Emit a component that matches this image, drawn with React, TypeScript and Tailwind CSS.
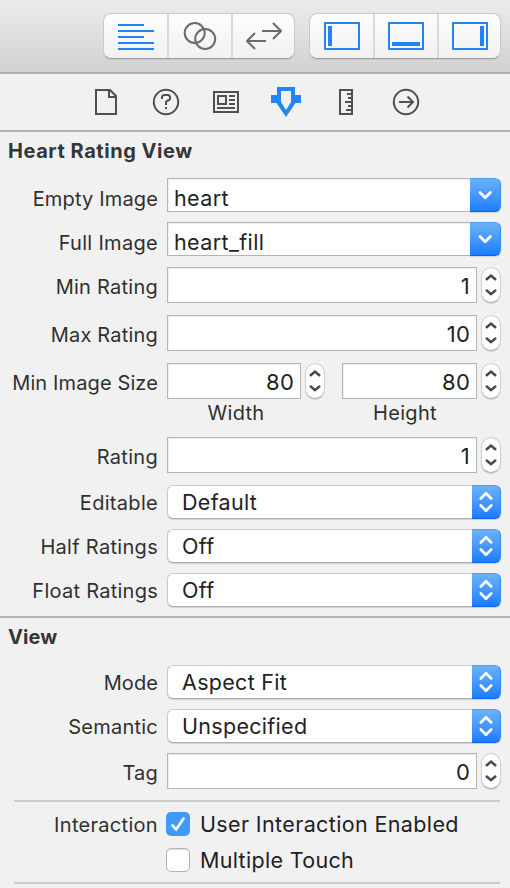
import type { ReactNode } from "react";

function Label({ children, className }: { children: ReactNode; className: string }) {
  return (
    <div className={`w-[158px] shrink-0 text-right text-[20px] leading-[24px] whitespace-nowrap text-[#303030] ${className}`}>
      {children}
    </div>
  );
}

function Row({ children, className }: { children: ReactNode; className: string }) {
  return <div className={`flex items-center ${className}`}>{children}</div>;
}

function Combo({ value }: { value: string }) {
  return (
    <div className="ml-[9px] flex h-[34px] w-[334px]">
      <div className="flex flex-1 items-center border border-r-0 border-[#b4b4b4] bg-white pt-[6px] pl-[6px] text-[21.5px] leading-[26px] tracking-[0.400px] text-[#222] shadow-[inset_1px_1px_0_#efefef]">
        {value}
      </div>
      <div className="flex h-[34px] w-[31px] items-center justify-center rounded-r-[6px] border border-l-0 border-t-[#4f9ff3] border-r-[#3489f5] border-b-[#0c63f2] bg-linear-to-b from-[#6bb1f8] to-[#187dfc] shadow-[0_1px_1px_#0002]">
        <svg width="16" height="12" viewBox="0 0 16 12" fill="none" stroke="#fff" strokeWidth="2.8" strokeLinecap="round" strokeLinejoin="round">
          <path d="M3 3.500 8.200 8.700l5.200-5.200" />
        </svg>
      </div>
    </div>
  );
}

function Popup({ value }: { value: string }) {
  return (
    <div className="ml-[9px] flex h-[34px] w-[334px] rounded-[6px] shadow-[0_1px_1px_#0002]">
      <div className="flex flex-1 items-center rounded-l-[6px] border border-r-0 border-[#c8c8c8] border-b-[#aeaeae] bg-white pb-[1px] pl-[14px] text-[21.500px] leading-[26px] tracking-[0.300px] text-[#222]">
        {value}
      </div>
      <div className="flex w-[29px] items-center justify-center rounded-r-[6px] border border-l-0 border-t-[#4f9ff3] border-r-[#3489f5] border-b-[#0c63f2] bg-linear-to-b from-[#6bb1f8] to-[#187dfc]">
        <svg className="shrink-0" width="16" height="22" viewBox="0 0 16 22" fill="none" stroke="#fff" strokeWidth="2.7" strokeLinecap="round" strokeLinejoin="round">
          <path d="M2.800 7.500 8 2.300 13.200 7.500M2.800 14.500 8 19.700 13.200 14.500" />
        </svg>
      </div>
    </div>
  );
}

function NumberField({ value, className }: { value: string; className: string }) {
  return (
    <>
      <div className={`flex h-[36px] items-center justify-end border border-[#b4b4b4] bg-white pt-[1px] pr-[6px] text-[22px] leading-[26px] tracking-[0.200px] text-[#222] shadow-[inset_1px_1px_0_#efefef] ${className}`}>
        {value}
      </div>
      <div className="ml-[4px] flex h-[36px] w-[20px] items-center justify-center rounded-full border border-[#cfcfcf] border-b-[#aaa] bg-white shadow-[0_1px_1px_#0002]">
        <svg className="shrink-0" width="14" height="24" viewBox="0 0 14 24" fill="none" stroke="#484848" strokeWidth="2.5" strokeLinecap="round" strokeLinejoin="miter">
          <path d="M2.700 6.300 7 2.600 11.300 6.300M2.700 17.500 7 21.200 11.300 17.500" />
        </svg>
      </div>
    </>
  );
}

function Segments({ icons }: { icons: [ReactNode, ReactNode, ReactNode] }) {
  return (
    <div className="flex h-[46px] w-[192px] overflow-hidden rounded-[8px] border border-[#c9c9c9] border-b-[#a2a2a2] bg-linear-to-b from-[#fdfdfd] to-[#f1f1f1] shadow-[0_1px_0_#0001]">
      <div className="flex w-[65px] items-center border-r-2 border-[#dadada] pl-[14px]">{icons[0]}</div>
      <div className="flex w-[64px] items-center border-r-2 border-[#dadada] pl-[13px]">{icons[1]}</div>
      <div className="flex flex-1 items-center pl-[13px]">{icons[2]}</div>
    </div>
  );
}

const blue = "#2284f7";

const editorIcons: [ReactNode, ReactNode, ReactNode] = [
  <svg key="a" className="shrink-0" width="36" height="28" viewBox="0 0 36 28" fill={blue}>
    <path d="M0 2h26v2H0zM0 8h36v2H0zM0 14h26v2H0zM0 20h36v2H0zM0 26h36v2H0z" />
  </svg>,
  <svg key="b" className="shrink-0" width="36" height="28" viewBox="0 0 36 28" fill="none" stroke="#6b6b6b" strokeWidth="2">
    <circle cx="12.700" cy="11" r="10" />
    <circle cx="23.200" cy="17" r="10" />
  </svg>,
  <svg key="c" className="shrink-0" width="36" height="28" viewBox="0 0 36 28" fill="none" stroke="#6b6b6b" strokeWidth="2">
    <path d="M16 9h19M27 1l8 8-8 8M20 19H1M9 11l-8 8 8 8" />
  </svg>,
];

const panelIcons: [ReactNode, ReactNode, ReactNode] = [
  <svg key="a" className="shrink-0" width="36" height="28" viewBox="0 0 36 28" fill={blue}>
    <path fillRule="evenodd" d="M0 0h36v28H0zM2 2v24h32V2z" />
    <path d="M4 4h4v20H4z" />
  </svg>,
  <svg key="b" className="shrink-0" width="36" height="28" viewBox="0 0 36 28" fill={blue}>
    <path fillRule="evenodd" d="M0 0h36v28H0zM2 2v24h32V2z" />
    <path d="M4 20h28v4H4z" />
  </svg>,
  <svg key="c" className="shrink-0" width="36" height="28" viewBox="0 0 36 28" fill={blue}>
    <path fillRule="evenodd" d="M0 0h36v28H0zM2 2v24h32V2z" />
    <path d="M28 4h4v20h-4z" />
  </svg>,
];

const tabIcons = [
  <svg key="file" width="30" height="30" viewBox="0 0 30 30" fill="none" stroke="#505050" strokeWidth="2">
    <path d="M5 3h14l6 6v18H5zM18 4v6h6" />
  </svg>,
  <svg key="help" width="30" height="30" viewBox="0 0 30 30" fill="none" stroke="#505050" strokeWidth="2">
    <circle cx="15" cy="15" r="12.200" />
    <path d="M11 12V9.500L12.500 8h5L19 9.500V12l-1.500 1.500h-1L15 15v3M15 20v2" />
  </svg>,
  <svg key="identity" width="30" height="30" viewBox="0 0 30 30" fill="none" stroke="#505050" strokeWidth="2">
    <path d="M3 5h24v20H3zM7 9h8v8H7zM18 9h6M18 13h6M18 17h6M6 21h18" />
  </svg>,
  <svg key="attributes" width="30" height="32" viewBox="0 0 30 32" fill={blue}>
    <path fillRule="evenodd" d="M6 1h18v8h6v8h-5.500L15 31 5.500 17H0V9h6zM10 5v11l5 8 5-8V5z" />
  </svg>,
  <svg key="size" width="30" height="30" viewBox="0 0 30 30" fill="none" stroke="#505050" strokeWidth="2">
    <path d="M9 3h12v24H9zM16 7h4M17 11h3M14 15h6M17 19h3M15 23h5" />
  </svg>,
  <svg key="connections" width="30" height="30" viewBox="0 0 30 30" fill="none" stroke="#505050" strokeWidth="2">
    <circle cx="15" cy="15" r="12.200" />
    <path d="M8 15h14M16.500 9.500 22 15l-5.500 5.500" />
  </svg>,
];

export default function App() {
  return (
    <div className="h-[888px] w-[510px] overflow-hidden bg-[#f1f1f1] font-['Inter','Liberation_Sans',sans-serif]">
      <header className="flex h-[74px] justify-between border-b-2 border-[#b0b0b0] bg-linear-to-b from-[#ececec] to-[#d1d1d1] pt-[13px] pr-[9px] pl-[103px]">
        <Segments icons={editorIcons} />
        <Segments icons={panelIcons} />
      </header>
      <nav className="flex h-[58px] items-center gap-[30px] border-b-2 border-[#b0b0b0] pl-[91px]">
        {tabIcons}
      </nav>

      <section className="h-[486px] border-b-2 border-[#b2b2b2]">
        <h2 className="h-[46px] pt-[6px] pl-[8px] text-[20px] leading-[26px] font-bold tracking-[0.550px] text-[#363636]">Heart Rating View</h2>
        <Row className="h-[34px]"><Label className="pt-[8px] tracking-[0.150px]">Empty Image</Label><Combo value="heart" /></Row>
        <Row className="mt-[10px] h-[34px]"><Label className="pt-[8px] tracking-[0.300px]">Full Image</Label><Combo value="heart_fill" /></Row>
        <Row className="mt-[11px] h-[36px]"><Label className="pt-[4px] tracking-[0.250px]">Min Rating</Label><NumberField value="1" className="ml-[9px] w-[310px]" /></Row>
        <Row className="mt-[12px] h-[36px]"><Label className="pt-[4px] tracking-[0.200px]">Max Rating</Label><NumberField value="10" className="ml-[9px] w-[310px]" /></Row>
        <Row className="mt-[12px] h-[36px]">
          <Label className="pt-[4px] tracking-[0.120px]">Min Image Size</Label>
          <NumberField value="80" className="ml-[9px] w-[134px]" />
          <NumberField value="80" className="ml-[17px] w-[135px]" />
        </Row>
        <div className="flex h-[38px] pt-[2px] pl-[167px] text-center text-[20px] leading-[24px] tracking-[0.300px] text-[#303030]">
          <div className="w-[138px]">Width</div>
          <div className="ml-[32px] w-[136px]">Height</div>
        </div>
        <Row className="h-[36px]"><Label className="pt-[4px] tracking-[0.300px]">Rating</Label><NumberField value="1" className="ml-[9px] w-[310px]" /></Row>
        <Row className="mt-[12px] h-[34px]"><Label className="pt-[2px] tracking-[0.300px]">Editable</Label><Popup value="Default" /></Row>
        <Row className="mt-[10px] h-[34px]"><Label className="pt-[2px] tracking-[0.300px]">Half Ratings</Label><Popup value="Off" /></Row>
        <Row className="mt-[10px] h-[34px]"><Label className="pt-[2px] tracking-[0.260px]">Float Ratings</Label><Popup value="Off" /></Row>
      </section>

      <section>
        <h2 className="h-[47px] pt-[6px] pl-[8px] text-[20px] leading-[26px] font-bold tracking-[0.100px] text-[#363636]">View</h2>
        <Row className="h-[34px]"><Label className="pt-[2px] tracking-[0.100px]">Mode</Label><Popup value="Aspect Fit" /></Row>
        <Row className="mt-[10px] h-[34px]"><Label className="pt-[2px] tracking-[0.240px]">Semantic</Label><Popup value="Unspecified" /></Row>
        <Row className="mt-[10px] h-[36px]"><Label className="pt-[4px] tracking-[0.200px]">Tag</Label><NumberField value="0" className="ml-[9px] w-[310px]" /></Row>
        <div className="mt-[11px] mr-[10px] ml-[14px] h-[2px] bg-[#cccccc]" />
        <Row className="mt-[10px] h-[24px]">
          <Label className="pt-[2px] tracking-[0.300px]">Interaction</Label>
          <div className="ml-[8px] flex size-[24px] items-center justify-center rounded-[5px] bg-[#3f9af9]">
            <svg width="18" height="18" viewBox="0 0 18 18" fill="none" stroke="#fff" strokeWidth="2.600" strokeLinecap="round">
              <path d="M3.500 10.500 7.200 14.500 14.500 3.500" />
            </svg>
          </div>
          <span className="ml-[10px] text-[21.500px] leading-[26px] tracking-[0.370px] whitespace-nowrap text-[#222]">User Interaction Enabled</span>
        </Row>
        <Row className="mt-[12px] h-[24px] pl-[166px]">
          <div className="size-[24px] rounded-[5px] border border-[#b4b4b4] bg-white shadow-[inset_0_1px_1px_#0002]" />
          <span className="ml-[10px] text-[21.500px] leading-[26px] tracking-[0.320px] whitespace-nowrap text-[#222]">Multiple Touch</span>
        </Row>
        <div className="mt-[10px] mr-[10px] ml-[14px] h-[2px] bg-[#cccccc]" />
      </section>
    </div>
  );
}
